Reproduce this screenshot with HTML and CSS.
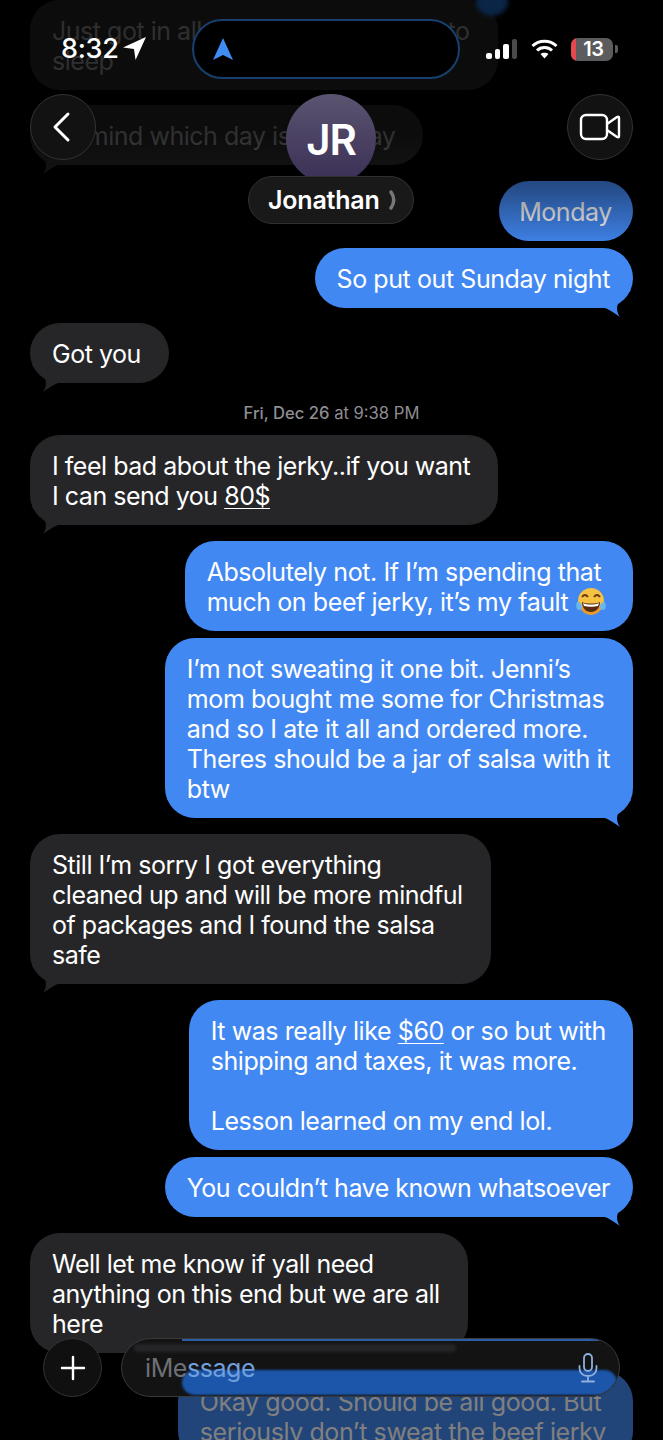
FILE: index.html
```html
<!DOCTYPE html>
<html lang="en">
<head>
    <meta charset="UTF-8">
    <meta name="viewport" content="width=device-width, initial-scale=1.0">
    <title>Jonathan</title>
    <link rel="stylesheet" href="styles.css">
</head>
<body>
<div class="screen">
    <svg width="0" height="0" class="defs">
        <symbol id="tail" viewBox="0 0 32 30">
            <path d="M1 19 C8 21 13 25 19 29 C16.5 26 15 20 17 16 C20 11 26 8 30 2 L20 2 Z"/>
        </symbol>
    </svg>

    <main class="thread">
        <div class="row"><div class="bubble them ghost">Just got in all the stuffs, and going to<br>sleep</div></div>
        <div class="row gap-s"><div class="bubble them ghost">To mind which day is yard day<svg class="tail tail-l"><use href="#tail"/></svg></div></div>
        <div class="row me gap-m"><div class="bubble blue narrow">Monday</div></div>
        <div class="row me gap-xs"><div class="bubble blue">So put out Sunday night<svg class="tail tail-r"><use href="#tail"/></svg></div></div>
        <div class="row gap-s"><div class="bubble them">Got you<svg class="tail tail-l"><use href="#tail"/></svg></div></div>
        <p class="stamp"><b>Fri, Dec 26</b> at 9:38 PM</p>
        <div class="row"><div class="bubble them">I feel bad about the jerky..if you want<br>I can send you <u>80$</u><svg class="tail tail-l"><use href="#tail"/></svg></div></div>
        <div class="row me gap-m"><div class="bubble blue wide">Absolutely not. If I’m spending that<br>much on beef jerky, it’s my fault
            <svg class="emoji" viewBox="0 0 30 30">
                <circle cx="15" cy="14" r="13" fill="#f5c242"/>
                <path d="M3 14 C4 25 10 28 15 28 C20 28 26 25 27 14 C26 20 20 22 15 22 C10 22 4 20 3 14 Z" fill="#e59a2c"/>
                <path d="M6 15 C10 17 20 17 24 15 C24 21 20 25 15 25 C10 25 6 21 6 15 Z" fill="#5b2a12"/>
                <path d="M7 16 C11 18 19 18 23 16 L22 19 C18 20 12 20 8 19 Z" fill="#fff"/>
                <path d="M6 10 Q9 6 12 10 M18 10 Q21 6 24 10" stroke="#6b3a14" stroke-width="2" fill="none"/>
                <path d="M1 15 C4 15 6 17 6 20 C6 23 3 24 1 22 C0 20 0 17 1 15 Z M29 15 C26 15 24 17 24 20 C24 23 27 24 29 22 C30 20 30 17 29 15 Z" fill="#6cb6f0"/>
            </svg>
        </div></div>
        <div class="row me gap-xs"><div class="bubble blue">I’m not sweating it one bit. Jenni’s<br>mom bought me some for Christmas<br>and so I ate it all and ordered more.<br>Theres should be a jar of salsa with it<br>btw<svg class="tail tail-r"><use href="#tail"/></svg></div></div>
        <div class="row gap-m"><div class="bubble them">Still I’m sorry I got everything<br>cleaned up and will be more mindful<br>of packages and I found the salsa<br>safe<svg class="tail tail-l"><use href="#tail"/></svg></div></div>
        <div class="row me gap-m"><div class="bubble blue wide">It was really like <u>$60</u> or so but with<br>shipping and taxes, it was more.<br><br>Lesson learned on my end lol.</div></div>
        <div class="row me gap-xs"><div class="bubble blue tight">You couldn’t have known whatsoever<svg class="tail tail-r"><use href="#tail"/></svg></div></div>
        <div class="row gap-m"><div class="bubble them">Well let me know if yall need<br>anything on this end but we are all<br>here</div></div>
        <div class="row me gap-l"><div class="bubble blue wide">Okay good. Should be all good. But<br>seriously don’t sweat the beef jerky</div></div>
    </main>

    <div class="fade-top"></div>
    <div class="fade-bottom"></div>
    <div class="blob"></div>

    <header class="status">
        <div class="clock">8:32
            <svg width="23" height="23" viewBox="0 0 22 22"><path d="M22 0 L0 10 L10.5 11.5 L12 22 Z" fill="#fff"/></svg>
        </div>
        <div class="island">
            <svg width="20" height="22" viewBox="0 0 20 22"><path d="M10 0 L20 22 L10 17 L0 22 Z" fill="#3f8cf3"/></svg>
        </div>
        <div class="indicators">
            <div class="signal"><i class="b1"></i><i class="b2"></i><i class="b3"></i><i class="b4"></i></div>
            <svg width="27" height="20" viewBox="0 0 27 20" fill="none" stroke="#fff" stroke-width="3">
                <path d="M1.5 7 C8 0.5 19 0.5 25.5 7"/>
                <path d="M6 11.5 C10 7.5 17 7.5 21 11.5"/>
                <path d="M13.5 19.5 L9.5 15 C11.5 13.3 15.5 13.3 17.5 15 Z" fill="#fff" stroke="none"/>
            </svg>
            <div class="battery"><span class="low"></span><span class="level">13</span></div>
            <span class="nub"></span>
        </div>
    </header>

    <nav class="topnav">
        <button class="round back">
            <svg width="20" height="32" viewBox="0 0 20 32" fill="none" stroke="#fff" stroke-width="3" stroke-linecap="round" stroke-linejoin="round"><path d="M17 3 L4 16 L17 29"/></svg>
        </button>
        <div class="contact">
            <div class="avatar">JR</div>
            <div class="name">Jonathan
                <svg width="9" height="20" viewBox="0 0 9 20" fill="none" stroke="#77777a" stroke-width="3.5" stroke-linecap="round" stroke-linejoin="round"><path d="M2 2 Q7.5 10 2 18"/></svg>
            </div>
        </div>
        <button class="round video">
            <svg width="42" height="28" viewBox="0 0 42 28" fill="none" stroke="#fff" stroke-width="2.4" stroke-linejoin="round"><rect x="2" y="2" width="26" height="24" rx="5"/><path d="M28 11 L38 4 Q40 3 40 5 V23 Q40 25 38 24 L28 17"/></svg>
        </button>
    </nav>

    <footer class="composer">
        <button class="round plus">
            <svg width="26" height="26" viewBox="0 0 26 26" stroke="#fff" stroke-width="2.4" stroke-linecap="round"><path d="M13 2 V24 M2 13 H24"/></svg>
        </button>
        <div class="field">
            <span class="edge"></span>
            <span class="streak"></span>
            <span class="under"></span>
            <span class="hint">iMe<span class="hint-blue">ssage</span></span>
            <svg class="mic" width="20" height="30" viewBox="0 0 20 30" fill="none" stroke="#8fb0dc" stroke-width="1.8" stroke-linecap="round"><rect x="6" y="1" width="8" height="17" rx="4"/><path d="M1.5 13 V15 C1.5 20 5 23 10 23 C15 23 18.5 20 18.5 15 V13 M10 23 V28 M4 28.5 H16"/></svg>
        </div>
    </footer>
</div>
</body>
</html>
```

FILE: styles.css
```css
html, body {
    margin: 0;
    background: #000;
}

.screen {
    position: relative;
    width: 663px;
    height: 1440px;
    overflow: hidden;
    background: #000;
    color: #fff;
    font-family: Inter, "Noto Sans", sans-serif;
}

.defs {
    position: absolute;
}

.thread {
    padding: 0 30px;
}

.row {
    display: flex;
}

.row.me {
    justify-content: flex-end;
}

.gap-xs { margin-top: 7px; }
.gap-s { margin-top: 15px; }
.gap-m { margin-top: 16px; }
.gap-l { margin-top: 18px; }

.bubble {
    position: relative;
    padding: 16px 23px 14px 22px;
    border-radius: 30px;
    font-size: 25px;
    line-height: 30px;
    letter-spacing: -0.42px;
    white-space: nowrap;
}

.bubble u {
    text-underline-offset: 3px;
    text-decoration-thickness: 1px;
}

.them {
    background: #262628;
    padding-right: 28px;
    letter-spacing: -0.48px;
}

.blue {
    background: #4288f3;
}

.blue.wide {
    padding-right: 27px;
}

.blue.tight {
    letter-spacing: -0.48px;
}

.blue.narrow {
    padding-left: 20px;
    padding-right: 21px;
}

.ghost {
    color: #909090;
}

.tail {
    position: absolute;
    bottom: -10px;
    width: 32px;
    height: 30px;
}

.tail-r {
    right: 0;
    fill: #4288f3;
}

.tail-l {
    left: 0;
    fill: #262628;
    transform: scaleX(-1);
}

.emoji {
    width: 30px;
    height: 30px;
    margin-left: 1px;
    vertical-align: -6px;
}

.stamp {
    margin: 19px 0 11px;
    text-align: center;
    font-size: 16.6px;
    line-height: 22px;
    color: #8e8e93;
}

.stamp b {
    font-weight: 500;
}

.fade-top {
    position: absolute;
    top: 0;
    left: 0;
    right: 0;
    height: 250px;
    background: linear-gradient(to bottom, rgba(0,0,0,0.68) 0, rgba(0,0,0,0.68) 135px, rgba(0,0,0,0.42) 190px, rgba(0,0,0,0) 250px);
}

.fade-bottom {
    position: absolute;
    top: 1365px;
    left: 0;
    right: 0;
    bottom: 0;
    background: rgba(0,0,0,0.5);
}

.blob {
    position: absolute;
    top: -14px;
    left: 476px;
    width: 32px;
    height: 30px;
    border-radius: 50%;
    background: #0b2547;
    filter: blur(2px);
}

/* status bar */
.status {
    position: absolute;
    top: 19px;
    left: 0;
    right: 0;
    height: 60px;
    display: flex;
    align-items: center;
}

.clock {
    width: 192px;
    padding-left: 61px;
    box-sizing: border-box;
    flex-shrink: 0;
    display: flex;
    align-items: center;
    gap: 4px;
    font-size: 27px;
    font-weight: 500;
    letter-spacing: -0.3px;
    white-space: nowrap;
    margin-top: -1px;
}

.island {
    width: 268px;
    height: 60px;
    box-sizing: border-box;
    flex-shrink: 0;
    margin-right: 26px;
    border: 2px solid #17406f;
    border-radius: 30px;
    background: #000;
    padding-left: 19px;
    display: flex;
    align-items: center;
}

.indicators {
    display: flex;
    align-items: center;
}

.signal {
    display: flex;
    align-items: flex-end;
    gap: 3px;
    height: 20px;
    margin-right: 14px;
}

.signal i {
    display: block;
    width: 5.5px;
    border-radius: 2px;
    background: #fff;
}

.signal .b1 { height: 6px; }
.signal .b2 { height: 10px; }
.signal .b3 { height: 15px; }
.signal .b4 { height: 20px; background: #4a4a4a; }

.battery {
    position: relative;
    width: 42px;
    height: 23px;
    margin-left: 13px;
    border-radius: 7px;
    overflow: hidden;
    background: #5c5c5e;
}

.battery .low {
    position: absolute;
    left: 0;
    top: 0;
    bottom: 0;
    width: 5px;
    background: #e5484d;
}

.battery .level {
    display: block;
    text-align: center;
    padding-left: 3px;
    font-size: 20px;
    font-weight: 600;
    line-height: 23px;
    letter-spacing: -0.4px;
}

.nub {
    width: 3px;
    height: 8px;
    margin-left: 2px;
    border-radius: 0 2px 2px 0;
    background: #5c5c5e;
}

/* top nav */
.topnav {
    position: absolute;
    top: 94px;
    left: 30px;
    right: 30px;
    display: flex;
    justify-content: space-between;
    align-items: flex-start;
}

.round {
    padding: 0;
    border: 1.5px solid #333;
    border-radius: 50%;
    display: flex;
    align-items: center;
    justify-content: center;
    background: #121213;
}

.back, .video {
    width: 66px;
    height: 66px;
}

.back svg {
    margin-right: 4px;
}

.contact {
    position: absolute;
    top: 0;
    left: 218px;
    width: 166px;
    display: flex;
    flex-direction: column;
    align-items: center;
}

.avatar {
    width: 90px;
    height: 90px;
    border-radius: 50%;
    background: linear-gradient(to bottom, #5b5470, #3a2f55);
    display: flex;
    align-items: center;
    justify-content: center;
    font-size: 42px;
    font-weight: 600;
    letter-spacing: -1px;
    box-sizing: border-box;
}

.name {
    width: 166px;
    height: 48px;
    box-sizing: border-box;
    margin-top: -8px;
    padding-left: 19px;
    border: 1.5px solid #303031;
    border-radius: 24px;
    background: #19191a;
    display: flex;
    align-items: center;
    gap: 9px;
    font-size: 25px;
    font-weight: 600;
    letter-spacing: -0.2px;
    white-space: nowrap;
}

/* message field */
.composer {
    position: absolute;
    top: 1338px;
    left: 43px;
    width: 577px;
    display: flex;
    gap: 19px;
}

.plus {
    width: 59px;
    height: 59px;
    flex-shrink: 0;
    background: #101011;
}

.field {
    position: relative;
    flex: 1;
    height: 59px;
    box-sizing: border-box;
    overflow: hidden;
    border: 1.5px solid #3a3a3c;
    border-radius: 30px;
    background: #131314;
    display: flex;
    align-items: center;
    justify-content: space-between;
    padding: 0 21px 0 23px;
}

.edge {
    position: absolute;
    left: 60px;
    right: 10px;
    top: 0;
    height: 1.5px;
    background: #2c5ea5;
}

.under {
    position: absolute;
    left: 60px;
    right: 2px;
    top: 31px;
    height: 25px;
    border-radius: 14px;
    background: #1c56aa;
    filter: blur(1px);
}

.streak {
    position: absolute;
    left: 12px;
    top: 5px;
    width: 322px;
    height: 8px;
    border-radius: 4px;
    background: #252527;
    filter: blur(1.5px);
}

.hint {
    position: relative;
    font-size: 25px;
    letter-spacing: -0.42px;
    color: #6f7074;
}

.hint-blue {
    color: #6f9fdc;
}

.mic {
    position: relative;
}
```
